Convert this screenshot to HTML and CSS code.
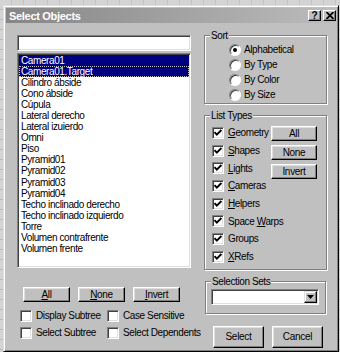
FILE: index.html
```html
<!DOCTYPE html>
<html lang="es">
<head>
    <meta charset="UTF-8">
    <title>Select Objects</title>
    <link rel="stylesheet" href="styles.css">
</head>
<body>
    <div class="dialog">
        <div class="titlebar">
            <span class="title">Select Objects</span>
            <span class="tb-buttons">
                <span class="tb-btn help">?</span>
                <span class="tb-btn">
                    <svg width="8" height="7" viewBox="0 0 8 7"><path d="M0.5 0 L7.5 7 M7.5 0 L0.5 7" stroke="#000" stroke-width="1.8"/></svg>
                </span>
            </span>
        </div>

        <div class="content">
            <div class="left">
                <div class="filter"></div>
                <div class="list">
                    <div class="item selected">Camera01</div>
                    <div class="item selected focused">Camera01.Target</div>
                    <div class="item">Cilindro ábside</div>
                    <div class="item">Cono ábside</div>
                    <div class="item">Cúpula</div>
                    <div class="item">Lateral derecho</div>
                    <div class="item">Lateral izuierdo</div>
                    <div class="item">Omni</div>
                    <div class="item">Piso</div>
                    <div class="item">Pyramid01</div>
                    <div class="item">Pyramid02</div>
                    <div class="item">Pyramid03</div>
                    <div class="item">Pyramid04</div>
                    <div class="item">Techo inclinado derecho</div>
                    <div class="item">Techo inclinado izquierdo</div>
                    <div class="item">Torre</div>
                    <div class="item">Volumen contrafrente</div>
                    <div class="item">Volumen frente</div>
                </div>
                <div class="btn-row">
                    <button class="btn small"><u>A</u>ll</button>
                    <button class="btn small"><u>N</u>one</button>
                    <button class="btn small"><u>I</u>nvert</button>
                </div>
                <div class="options">
                    <label class="check-row"><span class="box"></span>Display Subtree</label>
                    <label class="check-row"><span class="box"></span>Case Sensitive</label>
                    <label class="check-row"><span class="box"></span>Select Subtree</label>
                    <label class="check-row"><span class="box"></span>Select Dependents</label>
                </div>
            </div>

            <div class="right">
                <fieldset class="group sort">
                    <legend>Sort</legend>
                    <div class="group-body">
                        <div class="radio-row"><span class="radio on"></span>Alphabetical</div>
                        <div class="radio-row"><span class="radio"></span>By Type</div>
                        <div class="radio-row"><span class="radio"></span>By Color</div>
                        <div class="radio-row"><span class="radio"></span>By Size</div>
                    </div>
                </fieldset>

                <fieldset class="group types">
                    <legend>List Types</legend>
                    <div class="group-body">
                        <div class="type-checks">
                            <div class="check-row tall"><span class="box checked"></span><span><u>G</u>eometry</span></div>
                            <div class="check-row tall"><span class="box checked"></span><span><u>S</u>hapes</span></div>
                            <div class="check-row tall"><span class="box checked"></span><span><u>L</u>ights</span></div>
                            <div class="check-row tall"><span class="box checked"></span><span><u>C</u>ameras</span></div>
                            <div class="check-row tall"><span class="box checked"></span><span><u>H</u>elpers</span></div>
                            <div class="check-row tall"><span class="box checked"></span><span>Space <u>W</u>arps</span></div>
                            <div class="check-row tall"><span class="box checked"></span><span>Groups</span></div>
                            <div class="check-row tall"><span class="box checked"></span><span><u>X</u>Refs</span></div>
                        </div>
                        <div class="type-buttons">
                            <button class="btn small wide">All</button>
                            <button class="btn small wide">None</button>
                            <button class="btn small wide">Invert</button>
                        </div>
                    </div>
                </fieldset>

                <fieldset class="group sets">
                    <legend>Selection Sets</legend>
                    <div class="group-body">
                        <div class="combo">
                            <span class="combo-btn">
                                <svg width="7" height="4" viewBox="0 0 7 4"><path d="M0 0 H7 L3.5 4 Z" fill="#000"/></svg>
                            </span>
                        </div>
                    </div>
                </fieldset>

                <div class="actions">
                    <button class="btn big">Select</button>
                    <button class="btn big">Cancel</button>
                </div>
            </div>
        </div>
    </div>
</body>
</html>
```

FILE: styles.css
```css
body {
    margin: 0;
    height: 352px;
    overflow: hidden;
    font-family: "Liberation Sans", Arial, sans-serif;
    font-size: 10px;
    letter-spacing: -0.4px;
    color: #000;
    background-color: #d4d4d4;
    background-image:
        repeating-linear-gradient(to bottom, transparent 0, transparent 9px, #b9b9c4 9px, #b9b9c4 10px),
        repeating-linear-gradient(to right, transparent 0, transparent 11px, #c4c4c4 11px, #c4c4c4 12px);
}
.dialog {
    margin: 5px 1px 0 3px;
    height: 347px;
    box-sizing: border-box;
    padding: 2px;
    background-color: #c0c0c0;
    border: 1px solid;
    border-color: #dfdfdf #000 #000 #dfdfdf;
    box-shadow: inset 1px 1px #fff, inset -1px -1px #808080;
}
.titlebar {
    height: 15px;
    display: flex;
    align-items: center;
    justify-content: space-between;
    padding: 0 0 0 3px;
    background: linear-gradient(to right, #868686, #bcbcbc);
}
.title {
    color: #fff;
    font-weight: bold;
    font-size: 11px;
    letter-spacing: -0.3px;
}
.tb-buttons {
    display: flex;
    gap: 2px;
}
.tb-btn {
    width: 13px;
    height: 11px;
    box-sizing: border-box;
    display: flex;
    align-items: center;
    justify-content: center;
    background-color: #c0c0c0;
    border: 1px solid;
    border-color: #fff #000 #000 #fff;
    box-shadow: inset -1px -1px #808080;
    font-weight: bold;
    font-size: 10px;
    letter-spacing: 0;
    line-height: 9px;
}

.content {
    display: flex;
    gap: 13px;
    padding: 6px 0 0 11px;
}
.left {
    width: 174px;
    padding-top: 6px;
}
.filter {
    height: 16px;
    box-sizing: border-box;
    background-color: #fff;
    border: 1px solid;
    border-color: #808080 #fff #fff #808080;
    box-shadow: inset 1px 1px #404040, inset -1px -1px #dfdfdf;
}
.list {
    margin-top: 2px;
    height: 215px;
    box-sizing: border-box;
    padding: 1px;
    background-color: #fff;
    border: 1px solid;
    border-color: #808080 #fff #fff #808080;
    box-shadow: inset 1px 1px #404040, inset -1px -1px #dfdfdf;
}
.item {
    height: 11.06px;
    line-height: 11px;
    padding-left: 2px;
    white-space: nowrap;
}
.item.selected {
    background-color: #000080;
    color: #fff;
}
.item.focused {
    outline: 1px dotted #c0c0c0;
    outline-offset: -1px;
}

.btn {
    box-sizing: border-box;
    padding: 0;
    font-family: inherit;
    font-size: 10px;
    letter-spacing: -0.3px;
    color: #000;
    background-color: #c0c0c0;
    border: 1px solid;
    border-color: #fff #000 #000 #fff;
    box-shadow: inset -1px -1px #808080, inset 1px 1px #dfdfdf;
}
.btn.small {
    width: 47px;
    height: 15px;
    line-height: 12px;
}
.btn.wide {
    width: 46px;
}
.btn.big {
    width: 51px;
    height: 22px;
}
.btn-row {
    display: flex;
    gap: 8px;
    margin-top: 19px;
    padding-left: 6px;
}
.options {
    display: grid;
    grid-template-columns: 87px auto;
    margin-top: 5px;
    padding-left: 3px;
}
.check-row {
    display: flex;
    align-items: center;
    gap: 4px;
    height: 17px;
    white-space: nowrap;
}
.check-row.tall {
    height: 17.7px;
}
.box {
    width: 12px;
    height: 12px;
    flex: none;
    box-sizing: border-box;
    background-color: #fff;
    border: 1px solid;
    border-color: #808080 #fff #fff #808080;
    box-shadow: inset 1px 1px #404040, inset -1px -1px #dfdfdf;
}
.box.checked {
    background-image: url("data:image/svg+xml,%3Csvg xmlns='http://www.w3.org/2000/svg' width='10' height='10' viewBox='0 0 10 10'%3E%3Cpath d='M1.5 4.2 L3.8 6.6 L8.4 2' fill='none' stroke='%23000' stroke-width='1.9'/%3E%3C/svg%3E");
    background-repeat: no-repeat;
    background-position: center;
}

.right {
    width: 123px;
}
.group {
    margin: 0;
    padding: 0;
    min-width: 0;
    border: 1px solid #808080;
    box-shadow: inset 1px 1px #fff, 1px 1px #fff;
}
.group legend {
    margin-left: 5px;
    padding: 0 1px;
    line-height: 13px;
    background-color: #c0c0c0;
}
.sort .group-body {
    padding: 0 0 1px 24px;
}
.radio-row {
    display: flex;
    align-items: center;
    gap: 3px;
    height: 15px;
}
.radio {
    width: 12px;
    height: 12px;
    flex: none;
    box-sizing: border-box;
    border-radius: 50%;
    background-color: #fff;
    border: 1px solid;
    border-color: #808080 #fff #fff #808080;
    box-shadow: inset 1px 1px #404040;
    display: flex;
    align-items: center;
    justify-content: center;
}
.radio.on::after {
    content: "";
    width: 4px;
    height: 4px;
    border-radius: 50%;
    background-color: #000;
}
.types {
    margin-top: 5px;
}
.types .group-body {
    display: grid;
    grid-template-columns: minmax(0, 1fr) 46px;
    padding: 2px 9px 3px 7px;
}
.type-checks {
    min-width: 0;
}
.type-buttons {
    display: flex;
    flex-direction: column;
    gap: 4px;
    padding-top: 2px;
}
.sets {
    margin: 5px 1px 0 1px;
}
.sets .group-body {
    padding: 1px 6px 8px 5px;
}
.combo {
    height: 16px;
    box-sizing: border-box;
    display: flex;
    justify-content: flex-end;
    align-items: center;
    padding-right: 1px;
    background-color: #fff;
    border: 1px solid;
    border-color: #808080 #fff #fff #808080;
    box-shadow: inset 1px 1px #404040, inset -1px -1px #dfdfdf;
}
.combo-btn {
    width: 13px;
    height: 12px;
    box-sizing: border-box;
    display: flex;
    align-items: center;
    justify-content: center;
    background-color: #c0c0c0;
    border: 1px solid;
    border-color: #dfdfdf #000 #000 #dfdfdf;
    box-shadow: inset -1px -1px #808080, inset 1px 1px #fff;
}
.actions {
    display: flex;
    gap: 8px;
    margin-top: 12px;
    padding-left: 9px;
}
```
